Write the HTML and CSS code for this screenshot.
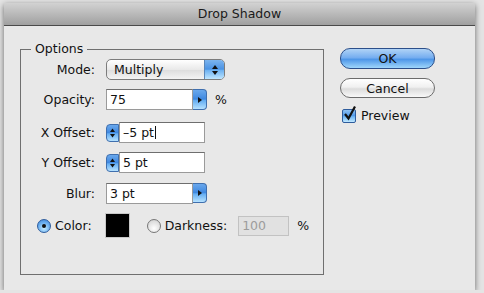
FILE: index.html
```html
<!DOCTYPE html>
<html lang="en">
<head>
    <meta charset="UTF-8">
    <title>Drop Shadow</title>
    <link rel="stylesheet" href="styles.css">
</head>
<body>
    <div class="window">
        <div class="titlebar">Drop Shadow</div>
        <div class="dialog">
            <fieldset class="options">
                <legend>Options</legend>

                <div class="row row-mode">
                    <span class="lbl">Mode:</span>
                    <div class="popup">
                        <span class="popup-text">Multiply</span>
                        <span class="popup-arrows">
                            <svg width="8" height="12" viewBox="0 0 8 12"><polygon points="4,1 7,5 1,5" fill="#111"/><polygon points="1,7 7,7 4,11" fill="#111"/></svg>
                        </span>
                    </div>
                </div>

                <div class="row row-opacity">
                    <span class="lbl">Opacity:</span>
                    <div class="field field-short">75</div>
                    <span class="menu-btn">
                        <svg width="6" height="8" viewBox="0 0 6 8"><polygon points="1,1 5,4 1,7" fill="#111"/></svg>
                    </span>
                    <span class="unit">%</span>
                </div>

                <div class="row row-x">
                    <span class="lbl">X Offset:</span>
                    <span class="stepper">
                        <svg width="7" height="12" viewBox="0 0 7 12"><polygon points="3.5,1.5 6,5 1,5" fill="#111"/><polygon points="1,7 6,7 3.5,10.5" fill="#111"/></svg>
                    </span>
                    <div class="field field-long">–5 pt<span class="caret"></span></div>
                </div>

                <div class="row row-y">
                    <span class="lbl">Y Offset:</span>
                    <span class="stepper">
                        <svg width="7" height="12" viewBox="0 0 7 12"><polygon points="3.5,1.5 6,5 1,5" fill="#111"/><polygon points="1,7 6,7 3.5,10.5" fill="#111"/></svg>
                    </span>
                    <div class="field field-long">5 pt</div>
                </div>

                <div class="row row-blur">
                    <span class="lbl">Blur:</span>
                    <div class="field field-short">3 pt</div>
                    <span class="menu-btn">
                        <svg width="6" height="8" viewBox="0 0 6 8"><polygon points="1,1 5,4 1,7" fill="#111"/></svg>
                    </span>
                </div>

                <div class="row row-color">
                    <span class="radio radio-on"><span class="dot"></span></span>
                    <span class="radio-label">Color:</span>
                    <span class="swatch"></span>
                    <span class="radio"></span>
                    <span class="radio-label">Darkness:</span>
                    <div class="field field-disabled">100</div>
                    <span class="unit unit-dark">%</span>
                </div>
            </fieldset>

            <div class="actions">
                <button type="button" class="btn btn-default">OK</button>
                <button type="button" class="btn">Cancel</button>
                <label class="check">
                    <span class="checkbox">
                        <svg width="15" height="17" viewBox="0 0 15 17"><path d="M3 9 L6.5 13.5 L13 1.5" fill="none" stroke="#111" stroke-width="2.2"/></svg>
                    </span>
                    Preview
                </label>
            </div>
        </div>
    </div>
</body>
</html>
```

FILE: styles.css
```css
body {
    margin: 0;
    padding: 0;
    background-color: #e4e4e4;
    font-family: "DejaVu Sans", sans-serif;
    font-size: 12px;
    color: #111;
}

.window {
    width: 471px;
    height: 287px;
    margin: 3px 0 0 4px;
    background-color: #e8e8e8;
    box-shadow: 0 2px 6px rgba(0, 0, 0, 0.55);
}

.titlebar {
    height: 22px;
    line-height: 22px;
    text-align: center;
    font-size: 12.5px;
    color: #1a1a1a;
    background: linear-gradient(#d2d2d2, #a0a0a0);
    border-bottom: 1px solid #4a4a4a;
}

.dialog {
    display: flex;
    padding: 16px 0 0 16px;
}

.options {
    box-sizing: border-box;
    width: 304px;
    height: 233px;
    margin: 0;
    padding: 0;
    border: 1px solid #6f6f6f;
}

.options legend {
    margin-left: 10px;
    padding: 0 4px;
    line-height: 14px;
    font-size: 12.5px;
}

.row {
    display: flex;
    align-items: center;
}

.lbl {
    width: 74px;
    text-align: right;
    margin-right: 11px;
    font-size: 12.5px;
}

.row-mode { margin-top: 3px; height: 21px; }
.row-opacity { margin-top: 9px; height: 21px; }
.row-x { margin-top: 12px; height: 21px; }
.row-y { margin-top: 9px; height: 21px; }
.row-blur { margin-top: 10px; height: 20px; }
.row-color { margin-top: 10px; height: 25px; padding-left: 16px; }

/* popup menu */
.popup {
    box-sizing: border-box;
    display: flex;
    width: 119px;
    height: 21px;
    border: 1px solid #7c7c7c;
    border-radius: 5px;
    overflow: hidden;
    background: linear-gradient(#ffffff, #e9e9e9 50%, #dedede 55%, #f4f4f4);
}

.popup-text {
    flex: 1;
    padding-left: 7px;
    line-height: 19px;
    font-size: 12.5px;
}

.popup-arrows {
    width: 19px;
    display: flex;
    align-items: center;
    justify-content: center;
    border-left: 1px solid #5a86b8;
    background: linear-gradient(#7cb4ee, #4b93e4 48%, #6fb3f2 55%, #bfe6ff);
}

/* text fields */
.field {
    box-sizing: border-box;
    height: 21px;
    line-height: 19px;
    padding-left: 3px;
    background-color: #fff;
    border: 1px solid #9a9a9a;
    border-top-color: #6e6e6e;
    font-size: 12.5px;
}

.field-short { width: 87px; }
.field-long { width: 86px; }

.field-disabled {
    width: 51px;
    height: 20px;
    line-height: 18px;
    background-color: #e1e1e1;
    border-color: #c2c2c2;
    color: #9c9c9c;
}

.caret {
    display: inline-block;
    width: 1px;
    height: 13px;
    margin-left: 1px;
    vertical-align: -2px;
    background-color: #111;
}

.menu-btn {
    box-sizing: border-box;
    width: 14px;
    height: 21px;
    display: flex;
    align-items: center;
    justify-content: center;
    border: 1px solid #3f6fae;
    border-left: none;
    border-radius: 0 4px 4px 0;
    background: linear-gradient(#6aa8ec, #3f88e0 48%, #64adf2 55%, #b6e2ff);
}

.row-blur .menu-btn {
    height: 20px;
}

.stepper {
    box-sizing: border-box;
    width: 13px;
    height: 18px;
    display: flex;
    align-items: center;
    justify-content: center;
    border: 1px solid #3f6fae;
    border-radius: 4px 0 0 4px;
    background: linear-gradient(#6aa8ec, #3f88e0 48%, #64adf2 55%, #b6e2ff);
}

.unit {
    margin-left: 8px;
    font-size: 12.5px;
}

.unit-dark {
    margin-left: 8px;
}

/* radios */
.radio {
    box-sizing: border-box;
    width: 14px;
    height: 14px;
    border-radius: 50%;
    border: 1px solid #777;
    background: radial-gradient(circle at 50% 70%, #ffffff, #dcdcdc 70%, #c8c8c8);
    display: flex;
    align-items: center;
    justify-content: center;
}

.radio-on {
    border-color: #2e5c9c;
    background: radial-gradient(circle at 50% 70%, #c4ebff, #6cb0f0 55%, #3a7fd6);
}

.dot {
    width: 4px;
    height: 4px;
    border-radius: 50%;
    background-color: #111;
}

.radio-label {
    margin-left: 4px;
    font-size: 12.5px;
}

.row-color .swatch {
    box-sizing: border-box;
    width: 25px;
    height: 25px;
    margin: 0 17px 0 13px;
    background-color: #000;
    border: 1px solid #c8c8c8;
}

.row-color .radio-label + .field-disabled {
    margin-left: 11px;
}

/* right column */
.actions {
    display: flex;
    flex-direction: column;
    margin: 6px 0 0 16px;
}

.btn {
    box-sizing: border-box;
    width: 95px;
    height: 20px;
    margin: 0 0 10px 0;
    padding: 0;
    border: 1px solid #6c6c6c;
    border-radius: 10px;
    font-family: "DejaVu Sans", sans-serif;
    font-size: 12.5px;
    color: #111;
    background: linear-gradient(#ffffff, #f0f0f0 45%, #dcdcdc 55%, #f8f8f8);
}

.btn-default {
    height: 21px;
    margin-bottom: 9px;
    border-color: #2c4f8a;
    background: linear-gradient(#b0d3f6, #76aef0 45%, #4f97e8 55%, #9fd6fb);
}

.check {
    display: flex;
    align-items: center;
    margin: 0 0 0 2px;
    font-size: 12.5px;
}

.checkbox {
    position: relative;
    box-sizing: border-box;
    width: 14px;
    height: 14px;
    margin-right: 5px;
    border: 1px solid #2e5c9c;
    border-radius: 2px;
    background: linear-gradient(#8ec2f4, #4f97e6 50%, #6cb4f4 55%, #c0e8ff);
}

.checkbox svg {
    position: absolute;
    left: -1px;
    top: -5px;
}
```
